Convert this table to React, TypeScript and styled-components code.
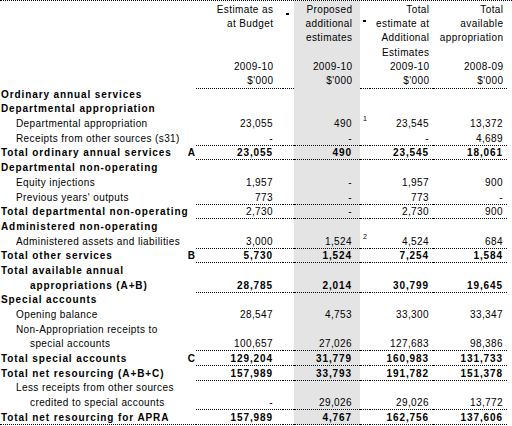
import React from 'react';
import styled, { createGlobalStyle } from 'styled-components';

const COLS = '196px 87px 11px 66px 10px 63px 74px';
const SHADE = '#e4e4e4';
const DOTS = '1px dotted #000';

interface RowData {
    label: string;
    indent?: 0 | 1 | 2;
    bold?: boolean;
    boldNums?: boolean;
    letter?: string;
    values?: [string, string, string, string];
    note?: string;
    line?: boolean;
    full?: boolean;
}

const rows: RowData[] = [
    { label: 'Ordinary annual services', bold: true },
    { label: 'Departmental appropriation', bold: true },
    { label: 'Departmental appropriation', indent: 1, values: ['23,055', '490', '23,545', '13,372'], note: '1' },
    { label: 'Receipts from other sources (s31)', indent: 1, values: ['-', '-', '-', '4,689'], line: true },
    { label: 'Total ordinary annual services', bold: true, boldNums: true, letter: 'A', values: ['23,055', '490', '23,545', '18,061'], line: true },
    { label: 'Departmental non-operating', bold: true },
    { label: 'Equity injections', indent: 1, values: ['1,957', '-', '1,957', '900'] },
    { label: "Previous years' outputs", indent: 1, values: ['773', '-', '773', '-'], line: true },
    { label: 'Total departmental non-operating', bold: true, values: ['2,730', '-', '2,730', '900'], line: true },
    { label: 'Administered non-operating', bold: true },
    { label: 'Administered assets and liabilities', indent: 1, values: ['3,000', '1,524', '4,524', '684'], note: '2', line: true },
    { label: 'Total other services', bold: true, boldNums: true, letter: 'B', values: ['5,730', '1,524', '7,254', '1,584'], line: true },
    { label: 'Total available annual', bold: true },
    { label: 'appropriations (A+B)', bold: true, boldNums: true, indent: 2, values: ['28,785', '2,014', '30,799', '19,645'], line: true },
    { label: 'Special accounts', bold: true },
    { label: 'Opening balance', indent: 1, values: ['28,547', '4,753', '33,300', '33,347'] },
    { label: 'Non-Appropriation receipts to', indent: 1 },
    { label: 'special accounts', indent: 2, values: ['100,657', '27,026', '127,683', '98,386'], line: true },
    { label: 'Total special accounts', bold: true, boldNums: true, letter: 'C', values: ['129,204', '31,779', '160,983', '131,733'], line: true },
    { label: 'Total net resourcing (A+B+C)', bold: true, boldNums: true, values: ['157,989', '33,793', '191,782', '151,378'], line: true },
    { label: 'Less receipts from other sources', indent: 1 },
    { label: 'credited to special accounts', indent: 2, values: ['-', '29,026', '29,026', '13,772'], line: true },
    { label: 'Total net resourcing for APRA', bold: true, boldNums: true, values: ['157,989', '4,767', '162,756', '137,606'], line: true, full: true },
];

const headers: string[][] = [
    ['Estimate as', 'at Budget', '', '', '2009-10', "$'000"],
    ['Proposed', 'additional', 'estimates', '', '2009-10', "$'000"],
    ['Total', 'estimate at', 'Additional', 'Estimates', '2009-10', "$'000"],
    ['Total', 'available', 'appropriation', '', '2008-09', "$'000"],
];

const pads = [10, 8, 4, 4];

const App: React.FC = () => {
    return (
        <>
            <GlobalStyle />
            <Sheet>
                <HeaderRow>
                    <HeadCell />
                    <HeadCell $line $pad={pads[0]}>
                        {headers[0].map((t, i) => <HeadLine key={i}>{t || '\u00a0'}</HeadLine>)}
                    </HeadCell>
                    <GapCell $line>
                        <Marker $top={12} />
                    </GapCell>
                    <HeadCell $line $shade $pad={pads[1]}>
                        {headers[1].map((t, i) => <HeadLine key={i}>{t || '\u00a0'}</HeadLine>)}
                    </HeadCell>
                    <GapCell $line>
                        <Marker $top={19} />
                    </GapCell>
                    <HeadCell $line $pad={pads[2]}>
                        {headers[2].map((t, i) => <HeadLine key={i}>{t || '\u00a0'}</HeadLine>)}
                    </HeadCell>
                    <HeadCell $line $pad={pads[3]}>
                        {headers[3].map((t, i) => <HeadLine key={i}>{t || '\u00a0'}</HeadLine>)}
                    </HeadCell>
                </HeaderRow>
                {rows.map((r, idx) => {
                    const v = r.values;
                    return (
                        <Row key={idx}>
                            <LabelCell $line={!!r.full} $bold={!!r.bold} $indent={r.indent || 0}>
                                <span>{r.label}</span>
                                {r.letter && <Letter>{r.letter}</Letter>}
                            </LabelCell>
                            <NumCell $line={!!r.line} $bold={!!r.boldNums} $pad={pads[0]}>{v ? v[0] : ''}</NumCell>
                            <GapCell $line={!!r.line} />
                            <NumCell $line={!!r.line} $bold={!!r.boldNums} $pad={pads[1]} $shade>{v ? v[1] : ''}</NumCell>
                            <GapCell $line={!!r.line}>
                                {r.note && <Note>{r.note}</Note>}
                            </GapCell>
                            <NumCell $line={!!r.line} $bold={!!r.boldNums} $pad={pads[2]}>{v ? v[2] : ''}</NumCell>
                            <NumCell $line={!!r.line} $bold={!!r.boldNums} $pad={pads[3]}>{v ? v[3] : ''}</NumCell>
                        </Row>
                    );
                })}
            </Sheet>
        </>
    );
};

const GlobalStyle = createGlobalStyle`
    * { box-sizing: border-box; }
    body {
        margin: 0;
        background: #ffffff;
    }
`;

const Sheet = styled.div`
    width: 512px;
    height: 426px;
    overflow: hidden;
    border-top: ${DOTS};
    font-family: 'Liberation Sans', Arial, sans-serif;
    font-size: 10px;
    color: #000;
`;

const HeaderRow = styled.div`
    display: grid;
    grid-template-columns: ${COLS};
    height: 86px;
`;

const HeadCell = styled.div<{ $line?: boolean; $shade?: boolean; $pad?: number }>`
    display: flex;
    flex-direction: column;
    align-items: flex-end;
    padding-top: 2px;
    padding-right: ${p => p.$pad || 0}px;
    background: ${p => (p.$shade ? SHADE : 'transparent')};
    border-bottom: 1px dotted ${p => (p.$line ? '#000' : 'transparent')};
`;

const HeadLine = styled.div`
    line-height: 14.2px;
    letter-spacing: 0.4px;
    margin-right: -0.4px;
    white-space: nowrap;
`;

const Row = styled.div`
    display: grid;
    grid-template-columns: ${COLS};
    height: 14.7px;
`;

const LabelCell = styled.div<{ $line: boolean; $bold: boolean; $indent: number }>`
    display: flex;
    align-items: flex-end;
    justify-content: space-between;
    padding-left: ${p => [1, 16, 30][p.$indent]}px;
    padding-right: 1px;
    font-weight: ${p => (p.$bold ? 700 : 400)};
    letter-spacing: ${p => (p.$bold ? '0.9px' : '0.4px')};
    line-height: 13px;
    white-space: nowrap;
    border-bottom: 1px dotted ${p => (p.$line ? '#000' : 'transparent')};
`;

const Letter = styled.span`
    margin-right: -0.9px;
`;

const NumCell = styled.div<{ $line: boolean; $bold: boolean; $pad: number; $shade?: boolean }>`
    display: flex;
    align-items: flex-end;
    justify-content: flex-end;
    padding-right: ${p => p.$pad}px;
    font-weight: ${p => (p.$bold ? 700 : 400)};
    letter-spacing: ${p => (p.$bold ? '0.9px' : '0.4px')};
    line-height: 13px;
    white-space: nowrap;
    background: ${p => (p.$shade ? SHADE : 'transparent')};
    border-bottom: 1px dotted ${p => (p.$line ? '#000' : 'transparent')};
`;

const GapCell = styled.div<{ $line?: boolean }>`
    position: relative;
    border-bottom: 1px dotted ${p => (p.$line ? '#000' : 'transparent')};
`;

const Marker = styled.span<{ $top: number }>`
    position: absolute;
    left: 3px;
    top: ${p => p.$top}px;
    width: 3px;
    height: 2px;
    background: #000;
`;

const Note = styled.span`
    position: absolute;
    left: 3px;
    top: -1px;
    font-size: 7px;
    line-height: 8px;
`;

export default App;
